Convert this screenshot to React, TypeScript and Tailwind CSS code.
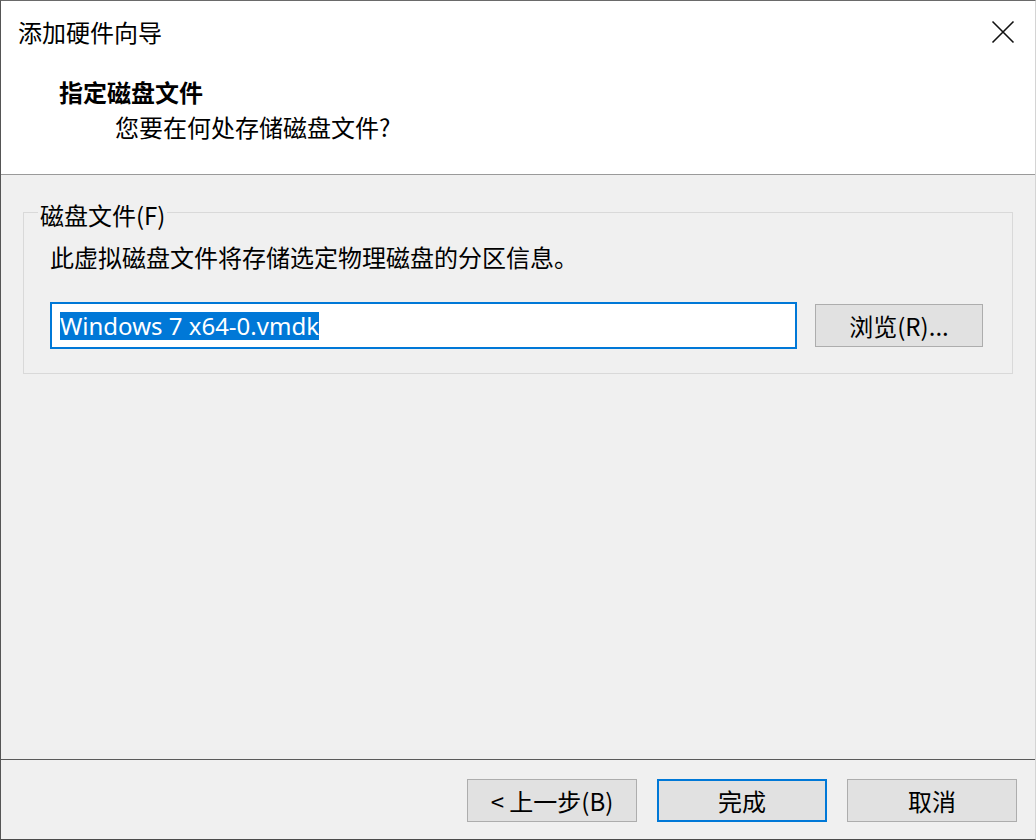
const font = { fontFamily: '"Noto Sans CJK SC", "Noto Sans", sans-serif' };

const CloseIcon = () => (
  <svg width="24" height="24" viewBox="0 0 24 24" fill="none">
    <path d="M1.5 1.5 L22.5 22.5 M22.5 1.5 L1.5 22.5" stroke="#111" strokeWidth="1.6" />
  </svg>
);

const WinButton = ({
  label,
  primary = false,
  className = '',
}: {
  label: string;
  primary?: boolean;
  className?: string;
}) => (
  <button
    className={
      'flex items-center justify-center bg-[#e1e1e1] text-[24px] leading-none text-black ' +
      (primary ? 'border-2 border-[#0078d7] ' : 'border border-[#adadad] ') +
      className
    }
  >
    {label}
  </button>
);

export default function App() {
  return (
    <div
      style={font}
      className="flex h-[840px] w-[1036px] flex-col border-t border-b border-l border-r border-t-[#6a6a6a] border-b-[#4a4a4a] border-l-[#555] border-r-[#d4d4d4] bg-[#f0f0f0] text-black"
    >
      {/* header */}
      <div className="h-[174px] shrink-0 border-b border-[#9a9a9a] bg-white">
        <div className="flex items-center justify-between pl-[17px] pr-[20px] pt-[17px]">
          <span className="text-[24px] leading-[28px]">添加硬件向导</span>
          <CloseIcon />
        </div>
        <div className="mt-[32px] pl-[58px] text-[24px] font-bold leading-[28px]">指定磁盘文件</div>
        <div className="mt-[7px] pl-[114px] text-[24px] leading-[28px]">您要在何处存储磁盘文件?</div>
      </div>

      {/* body */}
      <div className="flex-1">
        <div className="relative ml-[22px] mt-[37px] w-[990px] border border-[#d9d9d9] pb-[24px] pl-[26px] pt-[30px]">
          <span className="absolute left-[14px] top-[-12px] bg-[#f0f0f0] px-[2px] text-[24px] leading-[28px]">
            磁盘文件(F)
          </span>
          <div className="text-[24px] leading-[28px]">此虚拟磁盘文件将存储选定物理磁盘的分区信息。</div>
          <div className="mt-[31px] flex items-center gap-[18px]">
            <div className="flex h-[47px] w-[747px] items-center border-2 border-[#0078d7] bg-white pl-[8px]">
              <span
                className="bg-[#0078d7] text-[24px] leading-[28px] text-white"
                style={{ fontFamily: '"Noto Sans", sans-serif' }}
              >
                Windows 7 x64-0.vmdk
              </span>
            </div>
            <WinButton label="浏览(R)..." className="h-[43px] w-[168px]" />
          </div>
        </div>
      </div>

      {/* footer */}
      <div className="h-[80px] shrink-0 border-t border-[#5a5a5a]">
        <div className="flex justify-end gap-[20px] pr-[18px] pt-[19px]">
          <WinButton label="< 上一步(B)" className="h-[43px] w-[170px]" />
          <WinButton label="完成" primary className="h-[43px] w-[170px]" />
          <WinButton label="取消" className="h-[43px] w-[170px]" />
        </div>
      </div>
    </div>
  );
}
